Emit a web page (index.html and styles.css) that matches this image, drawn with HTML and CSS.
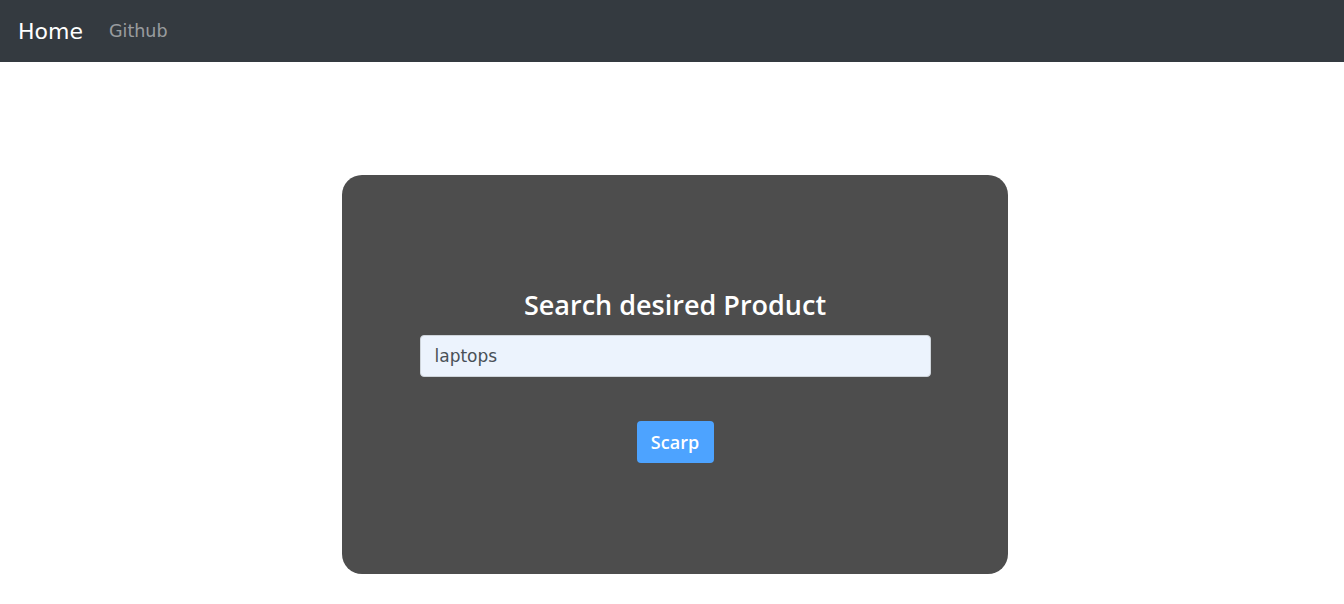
FILE: index.html
```html
<!DOCTYPE html>
<html>
<head>
<meta charset="utf-8">
<link rel="stylesheet" href="styles.css">
</head>
<body>
<nav class="navbar">
  <a class="brand" href="#">Home</a>
  <a class="nav-link" href="#">Github</a>
</nav>
<main class="main">
  <section class="card">
    <h3 class="title">Search desired Product</h3>
    <input class="search" type="text" value="laptops">
    <button class="btn">Scarp</button>
  </section>
</main>
</body>
</html>
```
FILE: styles.css
```css
* { box-sizing: border-box; }
body {
  margin: 0;
  font-family: "DejaVu Sans", sans-serif;
  background: #fff;
}
.navbar {
  height: 62px;
  background: #343a40;
  display: flex;
  align-items: center;
  padding: 0 18px;
}
.brand {
  color: #fff;
  font-size: 22px;
  text-decoration: none;
  margin-right: 26px;
}
.nav-link {
  color: rgba(255,255,255,.5);
  font-size: 17.5px;
  text-decoration: none;
}
.main {
  display: flex;
  justify-content: center;
  padding-top: 113px;
  padding-left: 6px;
}
.card {
  width: 666px;
  height: 399px;
  background: #4d4d4d;
  border-radius: 20px;
  display: flex;
  flex-direction: column;
  align-items: center;
  padding-top: 112px;
}
.title {
  color: #fff;
  font-family: "Open Sans", "DejaVu Sans", sans-serif;
  font-size: 27px;
  font-weight: 600;
  margin: 0 0 12px;
  line-height: 36px;
}
.search {
  width: 511px;
  height: 42px;
  border: 1px solid #ced4da;
  border-radius: 4px;
  background: #ecf3fd;
  padding: 0 14px;
  font-family: inherit;
  font-size: 17px;
  color: #495057;
}
.btn {
  margin-top: 44px;
  width: 77px;
  height: 42px;
  border: none;
  border-radius: 4px;
  background: #4da3ff;
  color: #fff;
  font-family: "Open Sans", "DejaVu Sans", sans-serif;
  font-weight: 600;
  font-size: 18px;
}
```
